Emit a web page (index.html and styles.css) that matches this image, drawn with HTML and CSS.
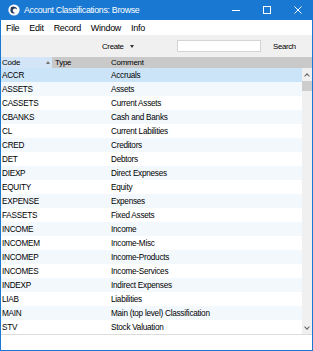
FILE: index.html
```html
<!DOCTYPE html>
<html lang="en">
<head>
  <meta charset="UTF-8" />
  <meta name="viewport" content="width=device-width, initial-scale=1.0"/>
  <title>Account Classifications: Browse</title>
  <link rel="stylesheet" href="styles.css">
</head>
<body>
  <div class="window">
    <div class="titlebar">
      <svg class="app-icon" width="12" height="12" viewBox="0 0 12 12">
        <circle cx="6" cy="6" r="5.6" fill="#fff"/>
        <path d="M3 3.2 C5 2 8.6 2.6 9.2 5.4 C8 4.4 6 4.2 5 5.6 C4.2 7 5.2 8.8 7.4 9 C5 10.2 2.4 8.8 2.4 6.4 C2.4 5.2 2.6 4 3 3.2 Z" fill="#2a3a5a"/>
      </svg>
      <span class="title">Account Classifications: Browse</span>
      <div class="controls">
        <span class="ctl">
          <svg width="10" height="10" viewBox="0 0 10 10"><path d="M1 5.5 H9" stroke="#fff" stroke-width="1"/></svg>
        </span>
        <span class="ctl">
          <svg width="10" height="10" viewBox="0 0 10 10"><rect x="1.5" y="1.5" width="7" height="7" fill="none" stroke="#fff" stroke-width="1"/></svg>
        </span>
        <span class="ctl">
          <svg width="10" height="10" viewBox="0 0 10 10"><path d="M1.5 1.5 L8.5 8.5 M8.5 1.5 L1.5 8.5" stroke="#fff" stroke-width="1"/></svg>
        </span>
      </div>
    </div>

    <div class="menubar">
      <span class="menu">File</span>
      <span class="menu">Edit</span>
      <span class="menu">Record</span>
      <span class="menu">Window</span>
      <span class="menu">Info</span>
    </div>

    <div class="toolbar">
      <span class="create">Create <span class="caret"></span></span>
      <input class="search-box" type="text">
      <span class="search-btn">Search</span>
    </div>

    <div class="grid">
      <div class="head">
        <span class="col-code sorted">Code <span class="sort-up"></span></span>
        <span class="col-type">Type</span>
        <span class="col-comment">Comment</span>
      </div>
      <div class="body">
        <div class="rows">
          <div class="row selected"><span class="col-code">ACCR</span><span class="col-type"></span><span class="col-comment">Accruals</span></div>
          <div class="row"><span class="col-code">ASSETS</span><span class="col-type"></span><span class="col-comment">Assets</span></div>
          <div class="row"><span class="col-code">CASSETS</span><span class="col-type"></span><span class="col-comment">Current Assets</span></div>
          <div class="row"><span class="col-code">CBANKS</span><span class="col-type"></span><span class="col-comment">Cash and Banks</span></div>
          <div class="row"><span class="col-code">CL</span><span class="col-type"></span><span class="col-comment">Current Labilities</span></div>
          <div class="row"><span class="col-code">CRED</span><span class="col-type"></span><span class="col-comment">Creditors</span></div>
          <div class="row"><span class="col-code">DET</span><span class="col-type"></span><span class="col-comment">Debtors</span></div>
          <div class="row"><span class="col-code">DIEXP</span><span class="col-type"></span><span class="col-comment">Direct Expneses</span></div>
          <div class="row"><span class="col-code">EQUITY</span><span class="col-type"></span><span class="col-comment">Equity</span></div>
          <div class="row"><span class="col-code">EXPENSE</span><span class="col-type"></span><span class="col-comment">Expenses</span></div>
          <div class="row"><span class="col-code">FASSETS</span><span class="col-type"></span><span class="col-comment">Fixed Assets</span></div>
          <div class="row"><span class="col-code">INCOME</span><span class="col-type"></span><span class="col-comment">Income</span></div>
          <div class="row"><span class="col-code">INCOMEM</span><span class="col-type"></span><span class="col-comment">Income-Misc</span></div>
          <div class="row"><span class="col-code">INCOMEP</span><span class="col-type"></span><span class="col-comment">Income-Products</span></div>
          <div class="row"><span class="col-code">INCOMES</span><span class="col-type"></span><span class="col-comment">Income-Services</span></div>
          <div class="row"><span class="col-code">INDEXP</span><span class="col-type"></span><span class="col-comment">Indirect Expenses</span></div>
          <div class="row"><span class="col-code">LIAB</span><span class="col-type"></span><span class="col-comment">Liabilities</span></div>
          <div class="row"><span class="col-code">MAIN</span><span class="col-type"></span><span class="col-comment">Main (top level) Classification</span></div>
          <div class="row"><span class="col-code">STV</span><span class="col-type"></span><span class="col-comment">Stock Valuation</span></div>
        </div>
        <div class="scrollbar">
          <span class="arrow up"></span>
          <span class="thumb"></span>
          <span class="track"></span>
          <span class="arrow down"></span>
        </div>
      </div>
    </div>

    <div class="footer"></div>
  </div>
</body>
</html>
```

FILE: styles.css
```css
body {
  margin: 0;
  font-family: "Liberation Sans", Arial, sans-serif;
  background: #fff;
}
.window {
  width: 313px;
  height: 351px;
  box-sizing: border-box;
  border: 1px solid #1979d2;
  border-top: 0;
  display: flex;
  flex-direction: column;
  overflow: hidden;
}
.titlebar {
  height: 20px;
  background: #1979d2;
  color: #fff;
  display: flex;
  align-items: center;
  margin: 0 -1px;
  padding-left: 8px;
}
.app-icon {
  flex: none;
  margin-right: 4px;
}
.title {
  font-size: 8.8px;
  letter-spacing: -0.3px;
}
.controls {
  margin-left: auto;
  display: flex;
}
.ctl {
  width: 31px;
  height: 20px;
  display: flex;
  align-items: center;
  justify-content: center;
}
.menubar {
  height: 15px;
  background: #fff;
  display: flex;
  align-items: center;
  gap: 10px;
  padding-left: 5px;
  font-size: 9px;
  letter-spacing: -0.3px;
  color: #000;
}

.toolbar {
  height: 22px;
  background: #f0f0f0;
  display: flex;
  align-items: center;
  font-size: 7.8px;
  letter-spacing: -0.3px;
  color: #000;
}
.create {
  margin-left: 101px;
  width: 75px;
  display: flex;
  align-items: center;
}
.caret {
  margin-left: 6px;
  width: 0;
  height: 0;
  border-left: 2.5px solid transparent;
  border-right: 2.5px solid transparent;
  border-top: 3px solid #333;
}
.search-box {
  margin: 0;
  width: 84px;
  height: 12px;
  box-sizing: border-box;
  border: 1px solid #d4d4d4;
  background: #fff;
  padding: 0;
}
.search-btn {
  margin-left: 12px;
}

.grid {
  display: flex;
  flex-direction: column;
  font-size: 8.2px;
  letter-spacing: -0.25px;
  color: #000;
}
.head {
  height: 11px;
  background: #c9c9c9;
  display: flex;
  align-items: center;
  font-size: 7.9px;
  letter-spacing: -0.2px;
}
.head .col-code {
  align-self: stretch;
  background: #d3e5f6;
  display: flex;
  align-items: center;
}
.sort-up {
  margin-left: auto;
  margin-right: 2px;
  width: 0;
  height: 0;
  border-left: 2.5px solid transparent;
  border-right: 2.5px solid transparent;
  border-bottom: 3px solid #707070;
}
.col-code {
  width: 51px;
  padding-left: 1px;
  box-sizing: border-box;
  flex: none;
}
.col-type {
  width: 58px;
  padding-left: 3px;
  box-sizing: border-box;
  flex: none;
}
.col-comment {
  flex: 1;
  padding-left: 1px;
  white-space: nowrap;
}
.body {
  display: flex;
  height: 266px;
}
.rows {
  flex: 1;
}
.row {
  height: 14px;
  display: flex;
  align-items: center;
  background: #fff;
}
.row:nth-child(even) {
  background: #f3f8fd;
}
.row.selected {
  background: #cce4f8;
}
.scrollbar {
  width: 10px;
  background: #f0f0f0;
  display: flex;
  flex-direction: column;
}
.arrow {
  height: 13px;
  display: flex;
  align-items: center;
  justify-content: center;
}
.arrow::before {
  content: "";
  width: 3px;
  height: 3px;
  border-left: 1px solid #606060;
  border-top: 1px solid #606060;
}
.arrow.up::before {
  transform: translateY(1px) rotate(45deg);
}
.arrow.down::before {
  transform: translateY(-1px) rotate(225deg);
}
.thumb {
  height: 10px;
  background: #cdcdcd;
}
.track {
  flex: 1;
}
.footer {
  flex: 1;
  background: #fff;
  border-top: 1px solid #dcdcdc;
}
```
